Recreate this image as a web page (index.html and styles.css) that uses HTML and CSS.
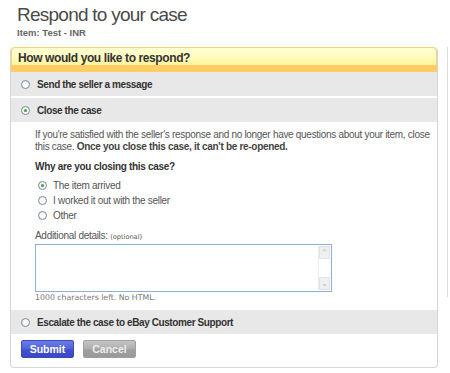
FILE: index.html
```html
<!DOCTYPE html>
<html>
<head>
    <title>Respond to your case</title>
    <link rel="stylesheet" href="styles.css">
</head>
<body>
    <div class="page">
        <div class="main">
            <h1 class="title">Respond to your case</h1>
            <div class="item">Item: Test - INR</div>

            <div class="panel">
                <div class="panel-head">How would you like to respond?</div>

                <div class="option">
                    <span class="radio"></span>
                    <span>Send the seller a message</span>
                </div>
                <div class="option option-open">
                    <span class="radio checked"></span>
                    <span>Close the case</span>
                </div>

                <div class="details">
                    <p class="intro">If you're satisfied with the seller's response and no longer have questions about your item, close this case. <b>Once you close this case, it can't be re-opened.</b></p>
                    <div class="question">Why are you closing this case?</div>
                    <div class="choices">
                        <div class="choice"><span class="radio checked"></span>The item arrived</div>
                        <div class="choice"><span class="radio"></span>I worked it out with the seller</div>
                        <div class="choice"><span class="radio"></span>Other</div>
                    </div>
                    <div class="label">Additional details: <small>(optional)</small></div>
                    <div class="textbox">
                        <textarea></textarea>
                        <div class="scroll">
                            <span class="arrow">&#8963;</span>
                            <span class="arrow">&#8964;</span>
                        </div>
                    </div>
                    <div class="hint">1000 characters left. No HTML.</div>
                </div>

                <div class="option">
                    <span class="radio"></span>
                    <span>Escalate the case to eBay Customer Support</span>
                </div>

                <div class="actions">
                    <button class="btn btn-submit">Submit</button>
                    <button class="btn btn-cancel">Cancel</button>
                </div>
            </div>
        </div>
        <div class="side"></div>
    </div>
</body>
</html>
```

FILE: styles.css
```css
body {
    margin: 0;
    padding: 0;
    background: #fff;
    font-family: "Liberation Sans", Arial, sans-serif;
    color: #333;
}

.page {
    display: flex;
    align-items: flex-start;
}

.main {
    width: 429px;
    margin-left: 10px;
}

.title {
    margin: 3px 0 0 7px;
    font-size: 19px;
    line-height: 24px;
    letter-spacing: -0.75px;
    font-weight: normal;
    color: #4a4a4a;
}

.item {
    margin: 0 0 0 7px;
    font-size: 9.5px;
    line-height: 12px;
    font-weight: bold;
    color: #666;
    height: 20px;
}

.panel {
    border: 1px solid #d6d6d6;
    border-top: none;
    border-radius: 4px;
    overflow: hidden;
}

.panel-head {
    height: 17px;
    padding: 0 0 0 6px;
    border: 1px solid #f4d46c;
    border-bottom: none;
    border-radius: 4px 4px 0 0;
    background: linear-gradient(#ffffd0 0%, #fffbc0 55%, #fff59a 100%);
    font-size: 12px;
    line-height: 21px;
    letter-spacing: -0.4px;
    font-weight: bold;
    color: #333;
    box-shadow: 0 7px 0 #ffcc66;
    margin-bottom: 7px;
    position: relative;
}

.option {
    display: flex;
    align-items: center;
    gap: 7px;
    height: 24px;
    padding-left: 10px;
    background: #e8e8e8;
    font-size: 10px;
    letter-spacing: -0.4px;
    font-weight: bold;
    color: #333;
}

.option + .option {
    margin-top: 2px;
}

.radio {
    display: inline-block;
    width: 7px;
    height: 7px;
    border: 1px solid #7f8a99;
    border-radius: 50%;
    background: radial-gradient(circle at 60% 60%, #ffffff 30%, #dde3ea 100%);
    position: relative;
    flex: none;
}

.radio.checked::after {
    content: "";
    position: absolute;
    left: 2px;
    top: 2px;
    width: 3px;
    height: 3px;
    border-radius: 50%;
    background: #2fa62f;
}

.details {
    padding: 7px 4px 7px 24px;
    font-size: 10px;
    letter-spacing: -0.3px;
    color: #555;
}

.intro {
    margin: 0 0 8px 0;
    line-height: 12px;
}

.intro b {
    color: #444;
}

.question {
    font-weight: bold;
    color: #333;
    line-height: 12px;
    margin-bottom: 5px;
}

.choices {
    padding-left: 3px;
    margin-bottom: 6px;
}

.choice {
    display: flex;
    align-items: center;
    gap: 6px;
    height: 15px;
}

.label {
    line-height: 13px;
}

.label small {
    font-family: "DejaVu Sans", Verdana, sans-serif;
    font-size: 6.6px;
    letter-spacing: 0;
    color: #555;
}

.textbox {
    display: flex;
    width: 295px;
    height: 46px;
    border: 1px solid #8fb0d8;
}

.textbox textarea {
    flex: 1;
    border: none;
    resize: none;
    padding: 2px;
    margin: 0;
    outline: none;
    font-family: "Liberation Sans", Arial, sans-serif;
}

.scroll {
    width: 11px;
    margin: 1px;
    border-left: 1px solid #eee;
    display: flex;
    flex-direction: column;
    justify-content: space-between;
}

.arrow {
    display: block;
    height: 11px;
    background: #f0f0f0;
    border: 1px solid #e2e2e2;
    color: #bbb;
    font-size: 8px;
    line-height: 11px;
    text-align: center;
}

.hint {
    margin-top: 1px;
    font-family: "DejaVu Sans", Verdana, sans-serif;
    font-size: 7.8px;
    letter-spacing: 0;
    line-height: 10px;
    color: #777;
}

.actions {
    display: flex;
    gap: 9px;
    padding: 6px 0 9px 10px;
}

.btn {
    height: 18px;
    width: 53px;
    border: 1px solid #999;
    border-radius: 2px;
    padding: 0;
    font-family: "Liberation Sans", Arial, sans-serif;
    font-size: 10.5px;
    font-weight: bold;
    color: #fff;
}

.btn-submit {
    background: linear-gradient(#6a7ae8 0%, #5566dc 45%, #4050d0 55%, #3a4ac4 100%);
    border-color: #3a4bb8;
}

.btn-cancel {
    background: linear-gradient(#c4c4c4 0%, #b0b0b0 45%, #a0a0a0 55%, #9a9a9a 100%);
    border-color: #a0a0a0;
    color: #eee;
}

.side {
    margin: 47px 0 0 9px;
    width: 2px;
    height: 250px;
    border-left: 1px solid #ddd;
}
```
